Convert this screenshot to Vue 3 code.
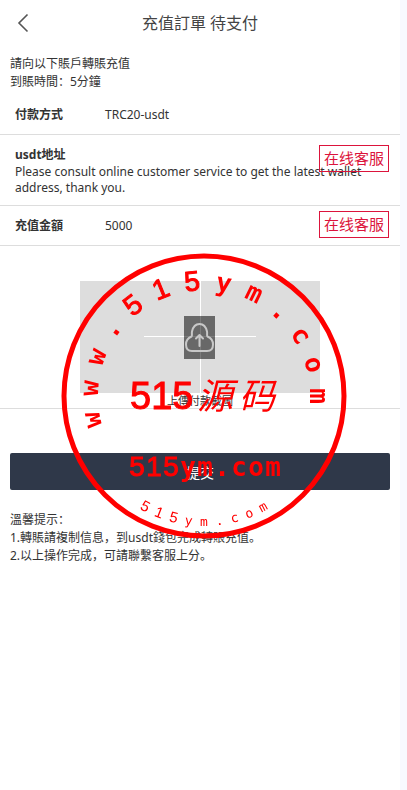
<script setup>
import { ref } from 'vue'

const amount = ref(5000)
const fileName = ref('')

const pickFile = (event) => {
    const file = event.target.files[0]
    fileName.value = file ? file.name : ''
}

const isDigit = (char) => /\d/.test(char)

// letters set round the stamp, angle in degrees from the top (or the bottom)
const spread = (text, from, step) =>
    text.split('').map((char, i) => ({ char, at: from + i * step, digit: isDigit(char) }))

const topLetters = spread('www.515ym.com', -102, 16)
const bottomLetters = spread('515ym.com', 28, -7)
// same, but along a straight line: the centre of each letter
const siteLetters = spread('515ym.com', -67, 17)
</script>
<template>
    <div class="page">
        <header class="header">
            <button class="back" type="button" aria-label="返回">
                <svg width="12" height="20" viewBox="0 0 12 20">
                    <path d="M10.500 1.500 L2 10 L10.500 18.500" fill="none" stroke="#555" stroke-width="1.600" />
                </svg>
            </button>
            <h1 class="title">充值訂單 待支付</h1>
        </header>

        <div class="intro">
            <p>請向以下賬戶轉賬充值</p>
            <p>到賬時間：5分鐘</p>
        </div>

        <div class="row">
            <span class="label">付款方式</span>
            <span class="value">TRC20-usdt</span>
        </div>
        <div class="row address">
            <span class="label">usdt地址</span>
            <p class="value">Please consult online customer service to get the latest wallet address, thank you.</p>
            <button class="service" type="button">在线客服</button>
        </div>
        <div class="row">
            <span class="label">充值金額</span>
            <span class="value">{{ amount }}</span>
            <button class="service" type="button">在线客服</button>
        </div>

        <div class="upload">
            <label class="upload-box" :title="fileName">
                <input class="file" type="file" accept="image/*" aria-label="上傳付款截圖" @change="pickFile" />
                <svg class="cross" viewBox="0 0 240 112">
                    <path d="M64 55.500 H176 M120.500 0 V112" stroke="#fff" />
                </svg>
                <svg class="cloud" width="32" height="43" viewBox="0 0 32 43">
                    <rect width="31" height="43" fill="#686868" />
                    <path d="M16.500 0 V43 M0 20.500 H31" stroke="#7c7c7c" />
                    <g fill="none" stroke="#c8c8c8" stroke-width="2" stroke-linecap="round" stroke-linejoin="round">
                        <path d="M8 35 C3.500 35 2 32 2 28.500 C2 25 4 22 7.500 20.500 C8.500 19.500 7.500 18 8 15.500 C9 11 12 8 15.500 8 C19 8 22 11 23 15.500 C23.500 18 22.500 19.500 23.500 20.500 C27 22 29 25 29 28.500 C29 32 27.500 35 23 35 Z" />
                        <path d="M15.500 30 V19 M12 22.500 L15.500 19 L19 22.500" />
                    </g>
                </svg>
            </label>
            <span class="upload-text">上傳付款截圖</span>
        </div>

        <button class="submit" type="button">提交</button>

        <div class="tips">
            <p>溫馨提示：</p>
            <p>1.轉賬請複制信息，到usdt錢包完成轉賬充值。</p>
            <p>2.以上操作完成，可請聯繫客服上分。</p>
        </div>

        <svg class="stamp" viewBox="-143 -143 286 286">
            <circle r="140" fill="none" stroke="#f00" stroke-width="5" />
            <text
                v-for="(item, i) in topLetters"
                :key="'t' + i"
                class="stamp-bold"
                :class="{ digit: item.digit }"
                y="-106"
                :transform="`rotate(${item.at})`"
            >{{ item.char }}</text>
            <text
                v-for="(item, i) in bottomLetters"
                :key="'b' + i"
                class="stamp-bottom"
                :class="{ digit: item.digit }"
                y="130"
                :transform="`rotate(${item.at})`"
            >{{ item.char }}</text>
            <text
                v-for="(item, i) in siteLetters"
                :key="'s' + i"
                class="stamp-bold"
                :class="{ digit: item.digit }"
                :x="item.at"
                y="80"
            >{{ item.char }}</text>
            <text class="stamp-number" x="-74" y="13">515</text>
            <text class="stamp-name" x="11" y="13">源</text>
            <text class="stamp-name" x="53" y="13">码</text>
        </svg>
    </div>
</template>

<style>
body {
    background: #f8f9ff;
}
</style>

<style scoped>
.page {
    position: relative;
    min-height: 100vh;
    margin-right: 7px;
    background: #fff;
    color: #333;
    font-family: "Noto Sans", "Noto Sans CJK SC", sans-serif;
    font-size: 12px;
    line-height: 18px;
}

p {
    margin: 0;
}

button {
    font-family: inherit;
    cursor: pointer;
}

.header {
    position: relative;
    display: flex;
    align-items: center;
    justify-content: center;
    height: 45px;
}

.back {
    position: absolute;
    left: 17px;
    display: flex;
    padding: 0;
    border: none;
    background: none;
}

.title {
    margin: 0;
    font-size: 16px;
    font-weight: 400;
    line-height: 24px;
    color: #444;
}

.intro {
    padding: 10px 10px 4px;
}

.row {
    position: relative;
    display: flex;
    align-items: center;
    box-sizing: border-box;
    height: 40px;
    padding: 0 15px;
    border-bottom: 1px solid #ddd;
}

.label {
    width: 90px;
    font-weight: 700;
}

.address {
    display: block;
    height: auto;
    padding-top: 11px;
    padding-bottom: 9px;
}

.address .label {
    display: block;
}

.address .value {
    line-height: 16px;
}

.service {
    position: absolute;
    top: 5px;
    right: 11px;
    height: 27px;
    padding: 0 4px;
    border: 1px solid #dc143c;
    background: none;
    color: #dc143c;
    font-size: 15px;
    line-height: 25px;
}

.address .service {
    top: 10px;
}

.upload {
    display: flex;
    flex-direction: column;
    align-items: center;
    padding-top: 35px;
    border-bottom: 1px solid #ddd;
}

.upload-box {
    position: relative;
    display: flex;
    align-items: center;
    justify-content: center;
    width: 60%;
    height: 112px;
    background: #ddd;
    cursor: pointer;
}

.file {
    position: absolute;
    inset: 0;
    width: 100%;
    opacity: 0;
}

.cross {
    position: absolute;
    inset: 0;
    width: 100%;
    height: 100%;
}

.cloud {
    position: relative;
}

.upload-text {
    font-size: 11px;
    line-height: 15px;
}

.submit {
    display: block;
    width: calc(100% - 20px);
    height: 37px;
    margin: 44px 10px 21px;
    border: none;
    border-radius: 2px;
    background: #2f3849;
    color: #fff;
    font-size: 14px;
}

.tips {
    padding: 0 10px;
}

/* the stamp lies over the whole form */
.stamp {
    position: absolute;
    top: 253px;
    left: calc(50% - 139px);
    width: 286px;
    height: 286px;
    pointer-events: none;
    fill: #f00;
}

.stamp text {
    font-family: "DejaVu Sans Mono", monospace;
    text-anchor: middle;
}

.stamp .digit,
.stamp .stamp-number {
    font-family: "Liberation Sans", sans-serif;
}

.stamp .stamp-bold {
    font-size: 26px;
    font-weight: 700;
}

.stamp .stamp-bold.digit {
    font-size: 28px;
    font-weight: 400;
    stroke: #f00;
    stroke-width: 1px;
}

.stamp .stamp-bottom {
    font-size: 13px;
}

.stamp .stamp-bottom.digit {
    font-size: 15px;
}

.stamp .stamp-number {
    font-size: 38px;
    stroke: #f00;
    stroke-width: 1px;
    text-anchor: start;
}

.stamp .stamp-name {
    font-family: "Noto Sans CJK SC", sans-serif;
    font-size: 36px;
    font-style: italic;
    font-weight: 400;
}
</style>
